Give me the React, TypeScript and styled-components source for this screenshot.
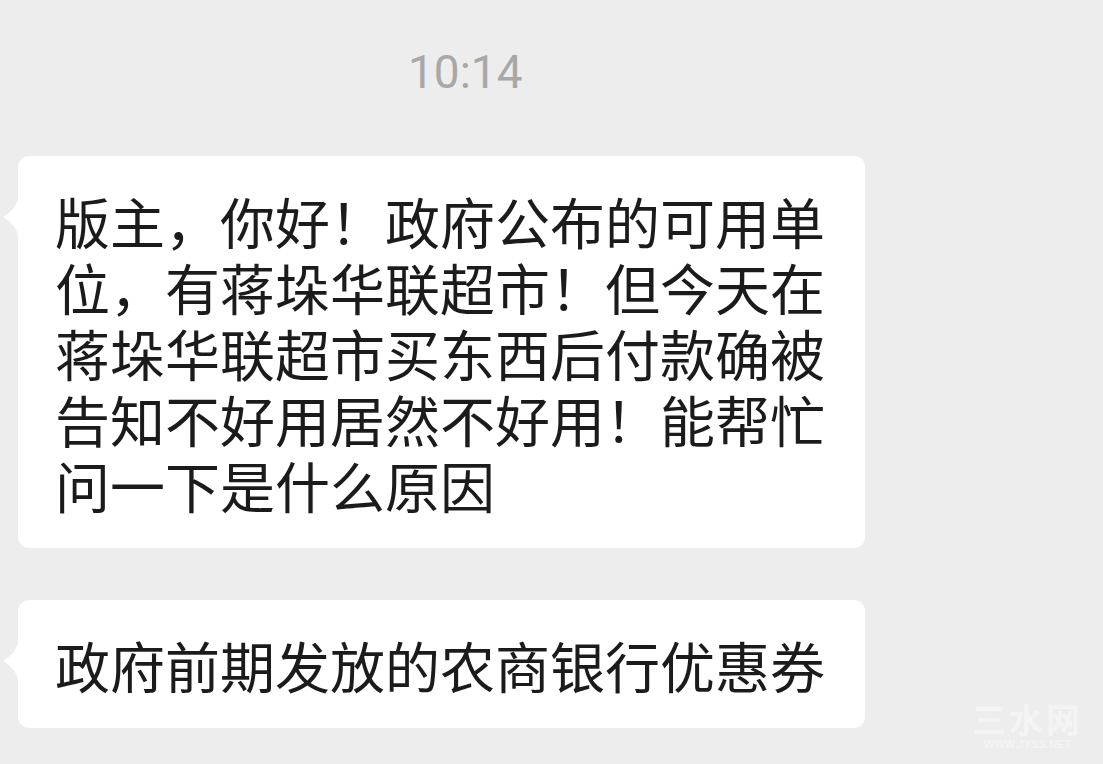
import React from "react";
import styled, { createGlobalStyle } from "styled-components";

const GlobalStyle = createGlobalStyle`
	html, body {
		margin: 0;
		padding: 0;
		background: #ededed;
	}
`;

const Screen = styled.div`
	position: relative;
	width: 1103px;
	height: 764px;
	overflow: hidden;
	background: #ededed;
	font-family: "Noto Sans CJK SC", "Noto Sans", sans-serif;
`;

const Chat = styled.div`
	display: flex;
	flex-direction: column;
	gap: 52px;
	padding: 0 0 0 18px;
`;

const TimeRow = styled.div`
	display: flex;
	padding: 44px 0 0 408px;
	height: 156px;
	box-sizing: border-box;
	color: #a8a8a8;
	font-family: Roboto, "Noto Sans", sans-serif;
	font-size: 46px;
	line-height: 56px;
`;

const Bubble = styled.div`
	position: relative;
	width: 847px;
	box-sizing: border-box;
	padding: 31px 0 31px 37px;
	background: #ffffff;
	border-radius: 11px;
	color: #1b1b1b;
	font-size: 55px;
	line-height: 66px;
`;

// little curved arrow on the left side of each bubble
const Tail = styled.svg`
	position: absolute;
	left: -17px;
	top: 39px;
`;

const Line = styled.span`
	display: block;
	white-space: nowrap;
`;

const Watermark = styled.div`
	position: absolute;
	right: 20px;
	bottom: 14px;
	display: flex;
	flex-direction: column;
	align-items: center;
	gap: 2px;
	color: #f4f4f4;
	font-family: "Liberation Sans", sans-serif;
	font-weight: bold;
`;

const MarkTitle = styled.span`
	font-family: "Noto Sans CJK SC", sans-serif;
	font-size: 34px;
	line-height: 34px;
	letter-spacing: 3px;
`;

const MarkUrl = styled.span`
	font-size: 11px;
	line-height: 12px;
`;

const firstLines = [
	"版主，你好！政府公布的可用单",
	"位，有蒋垛华联超市！但今天在",
	"蒋垛华联超市买东西后付款确被",
	"告知不好用居然不好用！能帮忙",
	"问一下是什么原因",
];

const BubbleTail = () => (
	<Tail width="20" height="44" viewBox="0 0 20 44">
		<path d="M20 0 L18 0 Q16 14 2 22 Q16 30 18 44 L20 44 Z" fill="#ffffff" />
	</Tail>
);

export default function App() {
	return (
		<Screen>
			<GlobalStyle />
			<TimeRow>10:14</TimeRow>
			<Chat>
				<Bubble>
					<BubbleTail />
					{firstLines.map((l) => (
						<Line key={l}>{l}</Line>
					))}
				</Bubble>
				<Bubble>
					<BubbleTail />
					<Line>政府前期发放的农商银行优惠券</Line>
				</Bubble>
			</Chat>
			<Watermark>
				<MarkTitle>三水网</MarkTitle>
				<MarkUrl>WWW.JYSS.NET</MarkUrl>
			</Watermark>
		</Screen>
	);
}
